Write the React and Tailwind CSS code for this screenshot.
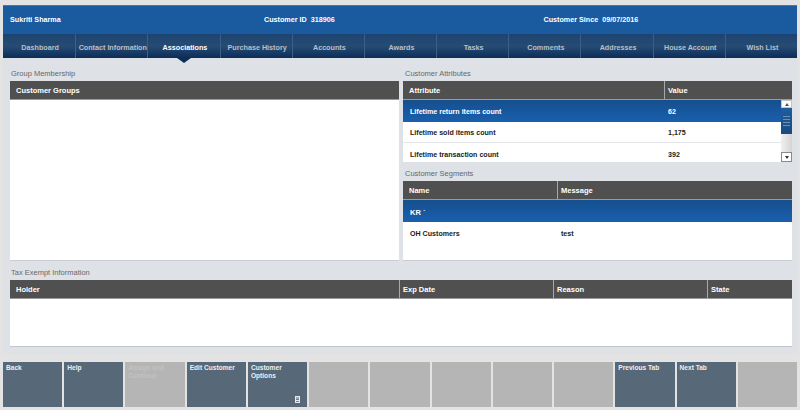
import React from 'react';

const tabs = ['Dashboard', 'Contact Information', 'Associations', 'Purchase History', 'Accounts', 'Awards', 'Tasks', 'Comments', 'Addresses', 'House Account', 'Wish List'];

const buttons = [
  { label: 'Back', on: true },
  { label: 'Help', on: true },
  { label: 'Assign and Continue' },
  { label: 'Edit Customer', on: true },
  { label: 'Customer Options', on: true, menu: true },
  {}, {}, {}, {}, {},
  { label: 'Previous Tab', on: true },
  { label: 'Next Tab', on: true },
  {},
];

const blueRow = 'bg-gradient-to-b from-[#154f8e] to-[#1a5fae] text-white';

const Label = ({ children, className = '' }) => (
  <div className={`text-[7.5px] font-normal text-[#66686c] leading-[9px] ${className}`}>{children}</div>
);

const Head = ({ cols }) => (
  <div className="flex h-[19px] shrink-0 bg-[#505050] border-b border-[#9a9a9a] text-white text-[7.5px] font-bold items-stretch">
    {cols.map((c, i) => (
      <div key={c.name} className={`flex items-center pt-px ${i > 0 ? 'border-l border-[#a8a8a8] pl-[3px]' : 'pl-[6px]'} ${c.w}`}>{c.name}</div>
    ))}
  </div>
);

const ScrollBar = () => (
  <div className="w-[11px] shrink-0 flex flex-col bg-white">
    <div className="h-[8px] flex items-center justify-center bg-white border border-[#c4c4c4]">
      <div className="w-0 h-0 border-x-[2.5px] border-x-transparent border-b-[3px] border-b-[#555]" />
    </div>
    <div className="h-[26px] bg-gradient-to-b from-[#1f5d9c] to-[#1a4a80] flex flex-col items-center justify-center gap-[2px]">
      <div className="w-[7px] h-px bg-[#6f8fb3]" />
      <div className="w-[7px] h-px bg-[#6f8fb3]" />
      <div className="w-[7px] h-px bg-[#6f8fb3]" />
      <div className="w-[7px] h-px bg-[#6f8fb3]" />
    </div>
    <div className="flex-1 bg-gradient-to-r from-[#f0f0f0] to-[#d4d4d4]" />
    <div className="h-[10px] flex items-center justify-center bg-white border border-[#8a8a8a]">
      <div className="w-0 h-0 border-x-[2.5px] border-x-transparent border-t-[3px] border-t-[#333]" />
    </div>
  </div>
);

const App = () => {
  return (
    <div className="w-[800px] h-[410px] overflow-hidden bg-[#e3e3e3] pt-[5px] px-[3px] flex flex-col font-['Liberation_Sans',Arial,sans-serif]">
      {/* Customer bar */}
      <div className="h-[29px] shrink-0 bg-[#1a5a9e] text-white text-[7.2px] font-bold grid grid-cols-[230px_1fr_1fr] items-center pl-[7px] border-t border-[#3f78b4]">
        <div>Sukriti Sharma</div>
        <div className="pl-[24px]">Customer ID&nbsp;&nbsp;318906</div>
        <div className="pl-[25px]">Customer Since&nbsp;&nbsp;09/07/2016</div>
      </div>

      {/* Tabs */}
      <div className="h-[24px] shrink-0 grid grid-cols-11 bg-gradient-to-b from-[#1d4470] via-[#264c74] to-[#0c2d58] text-[7.2px] font-bold text-[#b4c0cd]">
        {tabs.map((t, i) => (
          <div key={t} className={`relative flex items-center justify-center whitespace-nowrap pt-[5px] pl-[2px] ${i > 0 ? 'border-l border-[#3d5f85]' : ''} ${t === 'Associations' ? 'text-white' : ''}`}>
            {t}
            {t === 'Associations' && (
              <div className="absolute left-1/2 -translate-x-1/2 top-full w-0 h-0 border-x-[7px] border-x-transparent border-t-[5px] border-t-[#0c2d58]" />
            )}
          </div>
        ))}
      </div>

      {/* Content */}
      <div className="h-[296px] shrink-0 bg-[#dee1e6] pl-[7px] pr-[5px] pt-[11px] flex flex-col">
        <div className="flex gap-[4px] h-[192px]">
          <div className="w-[389px] flex flex-col">
            <Label className="mb-[3px] ml-px">Group Membership</Label>
            <Head cols={[{ name: 'Customer Groups', w: 'flex-1' }]} />
            <div className="flex-1 bg-white border-b border-[#c9ccd1]" />
          </div>

          <div className="w-[389px] flex flex-col">
            <Label className="mb-[3px] ml-[2px]">Customer Attributes</Label>
            <Head cols={[{ name: 'Attribute', w: 'w-[261px]' }, { name: 'Value', w: 'flex-1' }]} />
            <div className="flex h-[62px] shrink-0 bg-white text-[7.1px] font-bold text-[#222]">
              <div className="flex-1">
                <div className={`h-[22px] flex items-center pt-[3px] ${blueRow}`}>
                  <div className="w-[261px] pl-[7px]">Lifetime return items count</div>
                  <div className="pl-[4px]">62</div>
                </div>
                <div className="h-[21px] flex items-center pt-[3px] border-b border-[#e4e6e9]">
                  <div className="w-[261px] pl-[7px]">Lifetime sold items count</div>
                  <div className="pl-[4px]">1,175</div>
                </div>
                <div className="h-[19px] flex items-center pt-[6px]">
                  <div className="w-[261px] pl-[7px]">Lifetime transaction count</div>
                  <div className="pl-[4px]">392</div>
                </div>
              </div>
              <ScrollBar />
            </div>

            <Label className="mt-[7px] mb-[3px] ml-[2px]">Customer Segments</Label>
            <Head cols={[{ name: 'Name', w: 'w-[154px]' }, { name: 'Message', w: 'flex-1' }]} />
            <div className="flex-1 bg-white text-[7.1px] font-bold text-[#222] border-b border-[#c9ccd1]">
              <div className={`h-[22px] flex items-center pt-[3px] pl-[7px] text-[7.5px] ${blueRow}`}>KR `</div>
              <div className="h-[22px] flex items-center pt-[3px]">
                <div className="w-[151px] pl-[7px]">OH Customers</div>
                <div className="pl-[7px]">test</div>
              </div>
            </div>
          </div>
        </div>

        <Label className="mt-[7px] mb-[3px] ml-px">Tax Exempt Information</Label>
        <Head
          cols={[
            { name: 'Holder', w: 'w-[389px]' },
            { name: 'Exp Date', w: 'w-[154px]' },
            { name: 'Reason', w: 'w-[154px]' },
            { name: 'State', w: 'flex-1' },
          ]}
        />
        <div className="h-[48px] bg-white border-b border-[#c4c7cc]" />
      </div>

      {/* Action buttons */}
      <div className="mt-[8px] h-[45px] shrink-0 grid grid-cols-13 gap-[2px]">
        {buttons.map((b, i) => (
          <div
            key={i}
            className={`relative pl-[3px] pt-[2px] text-[6.6px] leading-[7.5px] font-bold ${b.on ? 'bg-[#576878] text-[#eef0f2]' : 'bg-[#b5b5b5] text-[#c2c2c2]'}`}
          >
            {b.label}
            {b.menu && (
              <svg className="absolute right-[7px] bottom-[4px]" width="5" height="7" viewBox="0 0 5 7">
                <rect x="0" y="0" width="5" height="7" fill="#e8eaec" />
                <rect x="1" y="1.5" width="3" height="1" fill="#576878" />
                <rect x="1" y="3.2" width="3" height="0.8" fill="#576878" />
                <rect x="1" y="5" width="3" height="0.8" fill="#576878" />
              </svg>
            )}
          </div>
        ))}
      </div>
    </div>
  );
};

export default App;
